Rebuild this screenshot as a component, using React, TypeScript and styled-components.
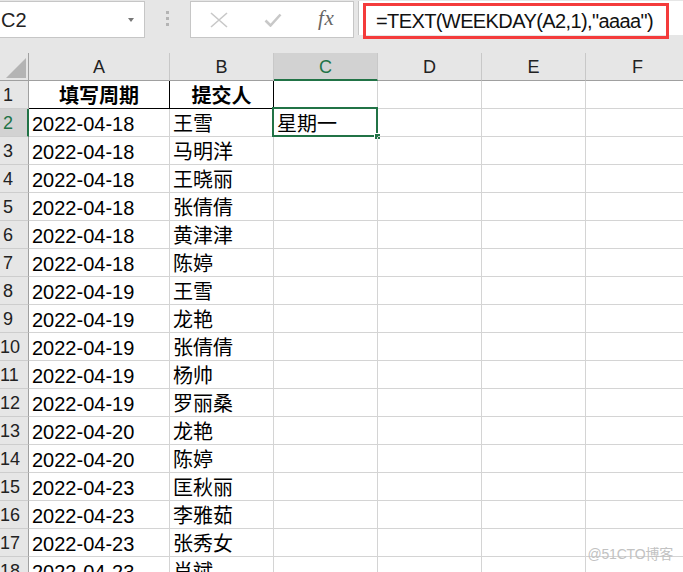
import React from 'react';
import styled, { createGlobalStyle, css } from 'styled-components';

const GlobalStyle = createGlobalStyle`
  html, body {
    margin: 0;
    padding: 0;
    background: #ffffff;
  }
  body {
    font-family: "Liberation Sans", "Noto Sans CJK SC", sans-serif;
    overflow: hidden;
  }
  * {
    box-sizing: border-box;
  }
`;

const GREEN = '#217346';

const Page = styled.div`
  position: relative;
  width: 683px;
  height: 572px;
  overflow: hidden;
  background: #ffffff;
`;

const Toolbar = styled.div`
  display: flex;
  align-items: flex-start;
  height: 38px;
  padding-top: 1px;
  background: #e6e6e6;
`;

const NameBox = styled.div`
  display: flex;
  align-items: flex-start;
  justify-content: space-between;
  width: 145px;
  height: 37px;
  padding: 7px 10px 0 1px;
  background: #ffffff;
  border: 1px solid #c6c6c6;
  border-left: none;
  font-size: 20px;
  line-height: 22px;
  color: #222;
`;

const DropArrow = styled.span`
  margin-top: 9px;
  width: 0;
  height: 0;
  border-left: 3.5px solid transparent;
  border-right: 3.5px solid transparent;
  border-top: 4px solid #777;
`;

const Grip = styled.div`
  display: flex;
  flex-direction: column;
  align-items: center;
  gap: 3px;
  width: 45px;
  padding-top: 10px;
`;

const GripDot = styled.span`
  width: 3px;
  height: 3px;
  background: #b4b4b4;
`;

const ButtonBox = styled.div`
  display: flex;
  align-items: center;
  width: 164px;
  height: 37px;
  padding-left: 1px;
  background: #ffffff;
  border: 1px solid #c6c6c6;
`;

const IconSlot = styled.div`
  display: flex;
  align-items: center;
  justify-content: center;
  width: 54px;
  height: 100%;
`;

const FxLabel = styled.span`
  font-family: "Liberation Serif", "DejaVu Serif", serif;
  font-style: italic;
  font-size: 21px;
  color: #666;
  letter-spacing: 0.5px;
  margin-top: -2px;
`;

const FormulaBox = styled.div`
  position: relative;
  flex: 1;
  height: 34px;
  margin-left: 4px;
  padding: 9px 0 0 17px;
  background: #ffffff;
  border-left: 1px solid #c6c6c6;
  font-size: 20px;
  line-height: 22px;
  letter-spacing: -0.6px;
  color: #111;
  white-space: nowrap;
`;

const Highlight = styled.div`
  position: absolute;
  left: 4px;
  top: 2px;
  width: 306px;
  height: 36px;
  border: 3px solid #f43b3b;
`;

const Band = styled.div`
  height: 15px;
  background: #e6e6e6;
`;

const Sheet = styled.div`
  display: grid;
  grid-template-columns: 29px 141px 104px 104px 104px 104px 104px;
  grid-auto-rows: 28px;
`;

const Corner = styled.div`
  display: flex;
  align-items: flex-end;
  justify-content: flex-end;
  padding: 0 2px 2px 0;
  background: #e6e6e6;
  border-right: 1px solid #a0a0a0;
  border-bottom: 1px solid #a0a0a0;
`;

const ColHead = styled.div<{ $active?: boolean }>`
  display: flex;
  align-items: flex-end;
  justify-content: center;
  padding-bottom: 2px;
  background: #e6e6e6;
  border-right: 1px solid #c8c8c8;
  border-bottom: 1px solid #a0a0a0;
  font-size: 18px;
  line-height: 22px;
  color: #222;
  ${(p) =>
    p.$active &&
    css`
      background: #d2d2d2;
      color: ${GREEN};
      border-bottom: 2px solid ${GREEN};
      padding-bottom: 1px;
    `}
`;

const RowHead = styled.div<{ $active?: boolean }>`
  display: flex;
  align-items: flex-end;
  padding-bottom: 2px;
  overflow: hidden;
  background: #e6e6e6;
  border-right: 1px solid #a0a0a0;
  border-bottom: 1px solid #cdcdcd;
  font-size: 18px;
  line-height: 21px;
  color: #222;
  ${(p) =>
    p.$active &&
    css`
      background: #d2d2d2;
      color: ${GREEN};
      border-right: 2px solid ${GREEN};
    `}
`;

const RowNum = styled.span`
  flex: 0 0 16px;
  display: flex;
  justify-content: center;
  white-space: nowrap;
`;

const Cell = styled.div<{ $head?: boolean }>`
  position: relative;
  display: flex;
  align-items: flex-end;
  padding: 0 3px 2px 3px;
  border-right: 1px solid #d4d4d4;
  border-bottom: 1px solid #d4d4d4;
  font-size: 20px;
  line-height: 20px;
  color: #000;
  white-space: nowrap;
  ${(p) =>
    p.$head &&
    css`
      justify-content: center;
      font-weight: bold;
      border-right-color: #000;
      border-bottom-color: #000;
    `}
`;

const Selection = styled.div`
  position: absolute;
  top: -2px;
  left: -2px;
  right: -1px;
  bottom: -1px;
  border: 2px solid ${GREEN};
`;

const Handle = styled.span`
  position: absolute;
  right: -5px;
  bottom: -5px;
  width: 7px;
  height: 7px;
  background: ${GREEN};
  border: 1px solid #ffffff;
`;

const Watermark = styled.div`
  position: absolute;
  right: 10px;
  bottom: 9px;
  font-size: 14px;
  color: #c2c2c2;
  letter-spacing: -0.2px;
`;

const columns = ['A', 'B', 'C', 'D', 'E', 'F'];

const rows: [string, string][] = [
  ['2022-04-18', '王雪'],
  ['2022-04-18', '马明洋'],
  ['2022-04-18', '王晓丽'],
  ['2022-04-18', '张倩倩'],
  ['2022-04-18', '黄津津'],
  ['2022-04-18', '陈婷'],
  ['2022-04-19', '王雪'],
  ['2022-04-19', '龙艳'],
  ['2022-04-19', '张倩倩'],
  ['2022-04-19', '杨帅'],
  ['2022-04-19', '罗丽桑'],
  ['2022-04-20', '龙艳'],
  ['2022-04-20', '陈婷'],
  ['2022-04-23', '匡秋丽'],
  ['2022-04-23', '李雅茹'],
  ['2022-04-23', '张秀女'],
  ['2022-04-23', '肖斌'],
];

const CrossIcon = () => (
  <svg width="20" height="16" viewBox="0 0 20 16">
    <path d="M2 1 L18 15 M18 1 L2 15" stroke="#c8c8c8" strokeWidth="1.6" fill="none" />
  </svg>
);

const CheckIcon = () => (
  <svg width="18" height="14" viewBox="0 0 18 14">
    <path d="M1.5 7.5 L6.5 12.5 L16.5 1.5" stroke="#c8c8c8" strokeWidth="2.6" fill="none" />
  </svg>
);

const CornerMark = () => (
  <svg width="20" height="20" viewBox="0 0 20 20">
    <polygon points="20,0 20,20 0,20" fill="#b4b4b4" />
  </svg>
);

export default function App() {
  return (
    <Page>
      <GlobalStyle />
      <Toolbar>
        <NameBox>
          <span>C2</span>
          <DropArrow />
        </NameBox>
        <Grip>
          <GripDot />
          <GripDot />
          <GripDot />
        </Grip>
        <ButtonBox>
          <IconSlot>
            <CrossIcon />
          </IconSlot>
          <IconSlot>
            <CheckIcon />
          </IconSlot>
          <IconSlot>
            <FxLabel>fx</FxLabel>
          </IconSlot>
        </ButtonBox>
        <FormulaBox>
          =TEXT(WEEKDAY(A2,1),"aaaa")
          <Highlight />
        </FormulaBox>
      </Toolbar>
      <Band />
      <Sheet>
        <Corner>
          <CornerMark />
        </Corner>
        {columns.map((c) => (
          <ColHead key={c} $active={c === 'C'}>
            {c}
          </ColHead>
        ))}

        <RowHead>
          <RowNum>1</RowNum>
        </RowHead>
        <Cell $head>填写周期</Cell>
        <Cell $head>提交人</Cell>
        <Cell />
        <Cell />
        <Cell />
        <Cell />

        {rows.map(([date, name], i) => {
          const n = i + 2;
          return (
            <React.Fragment key={n}>
              <RowHead $active={n === 2}>
                <RowNum>{n}</RowNum>
              </RowHead>
              <Cell>{date}</Cell>
              <Cell>{name}</Cell>
              <Cell>
                {n === 2 && '星期一'}
                {n === 2 && (
                  <Selection>
                    <Handle />
                  </Selection>
                )}
              </Cell>
              <Cell />
              <Cell />
              <Cell />
            </React.Fragment>
          );
        })}
      </Sheet>
      <Watermark>@51CTO博客</Watermark>
    </Page>
  );
}
